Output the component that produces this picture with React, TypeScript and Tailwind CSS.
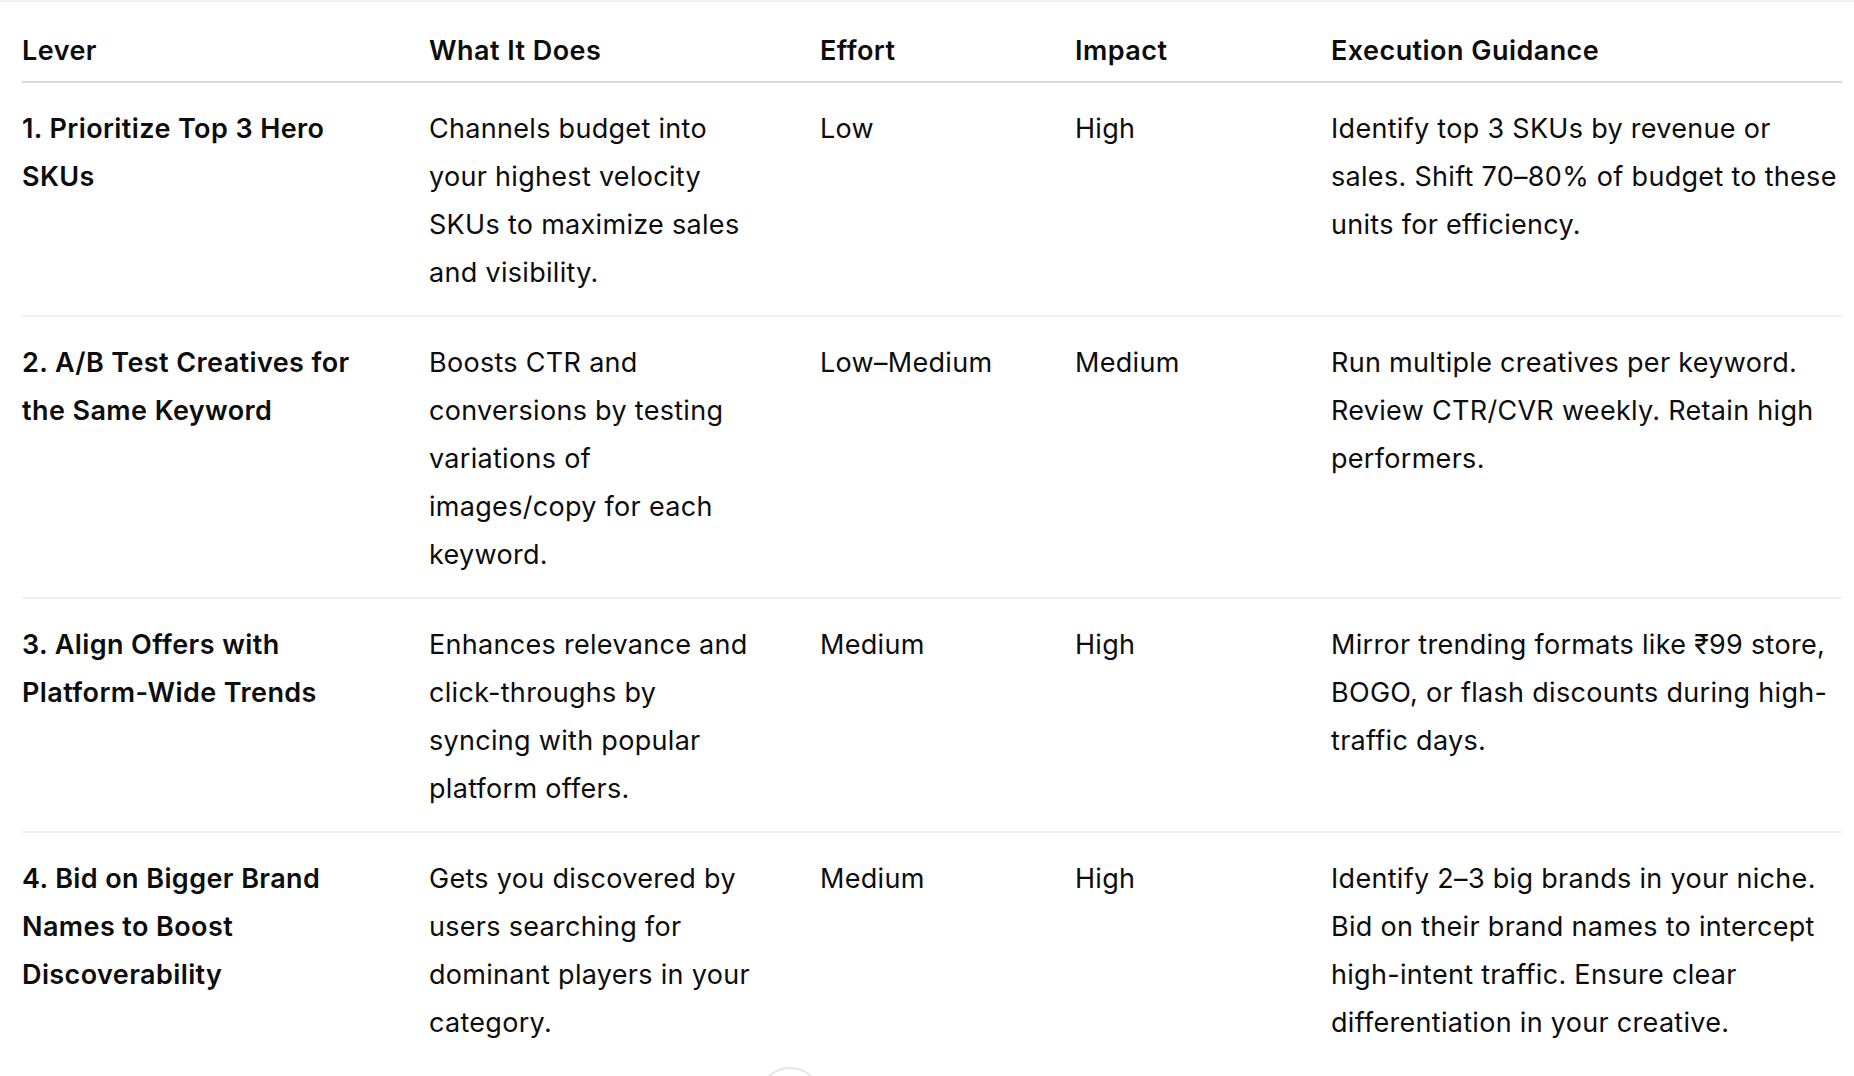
import React from "react";

type Row = { lever: string[]; what: string[]; effort: string; impact: string; guide: string[] };

const rows: Row[] = [
  {
    lever: ["1. Prioritize Top 3 Hero", "SKUs"],
    what: ["Channels budget into", "your highest velocity", "SKUs to maximize sales", "and visibility."],
    effort: "Low",
    impact: "High",
    guide: ["Identify top 3 SKUs by revenue or", "sales. Shift 70–80% of budget to these", "units for efficiency."],
  },
  {
    lever: ["2. A/B Test Creatives for", "the Same Keyword"],
    what: ["Boosts CTR and", "conversions by testing", "variations of", "images/copy for each", "keyword."],
    effort: "Low–Medium",
    impact: "Medium",
    guide: ["Run multiple creatives per keyword.", "Review CTR/CVR weekly. Retain high", "performers."],
  },
  {
    lever: ["3. Align Offers with", "Platform-Wide Trends"],
    what: ["Enhances relevance and", "click-throughs by", "syncing with popular", "platform offers."],
    effort: "Medium",
    impact: "High",
    guide: ["Mirror trending formats like ₹99 store,", "BOGO, or flash discounts during high-", "traffic days."],
  },
  {
    lever: ["4. Bid on Bigger Brand", "Names to Boost", "Discoverability"],
    what: ["Gets you discovered by", "users searching for", "dominant players in your", "category."],
    effort: "Medium",
    impact: "High",
    guide: ["Identify 2–3 big brands in your niche.", "Bid on their brand names to intercept", "high-intent traffic. Ensure clear", "differentiation in your creative."],
  },
];

function Lines({ lines }: { lines: string[] }) {
  return (
    <>
      {lines.map((l, i) => (
        <span key={i} className="block whitespace-nowrap">
          {l}
        </span>
      ))}
    </>
  );
}

export default function App() {
  return (
    <div
      className="relative h-[1076px] w-[1854px] overflow-hidden bg-white text-[#0d0d0d]"
      style={{ fontFamily: "Inter, 'Noto Sans', sans-serif" }}
    >
      <div className="h-[2px] w-full bg-[#f0f0f0]" />
      <div className="pl-[22px] pr-[12px] text-[27px] leading-[48px] tracking-[0.3px]">
        <div className="grid grid-cols-[407px_391px_255px_256px_1fr] border-b-2 border-[#dadada] pt-[25px] pb-[6px] font-semibold tracking-[0.45px]">
          <div>Lever</div>
          <div>What It Does</div>
          <div>Effort</div>
          <div>Impact</div>
          <div>Execution Guidance</div>
        </div>
        {rows.map((r, i) => (
          <div
            key={i}
            className={
              "grid grid-cols-[407px_391px_255px_256px_1fr] pt-[22px] pb-[18px] " +
              (i < rows.length - 1 ? "border-b-2 border-[#f0f0f0]" : "")
            }
          >
            <div className="font-semibold tracking-[0.4px]">
              <Lines lines={r.lever} />
            </div>
            <div>
              <Lines lines={r.what} />
            </div>
            <div className="whitespace-nowrap">{r.effort}</div>
            <div className="whitespace-nowrap">{r.impact}</div>
            <div>
              <Lines lines={r.guide} />
            </div>
          </div>
        ))}
      </div>
      <div className="absolute left-[758px] top-[1067px] h-[64px] w-[64px] rounded-full border-2 border-[#e6e6e6] bg-white" />
    </div>
  );
}
